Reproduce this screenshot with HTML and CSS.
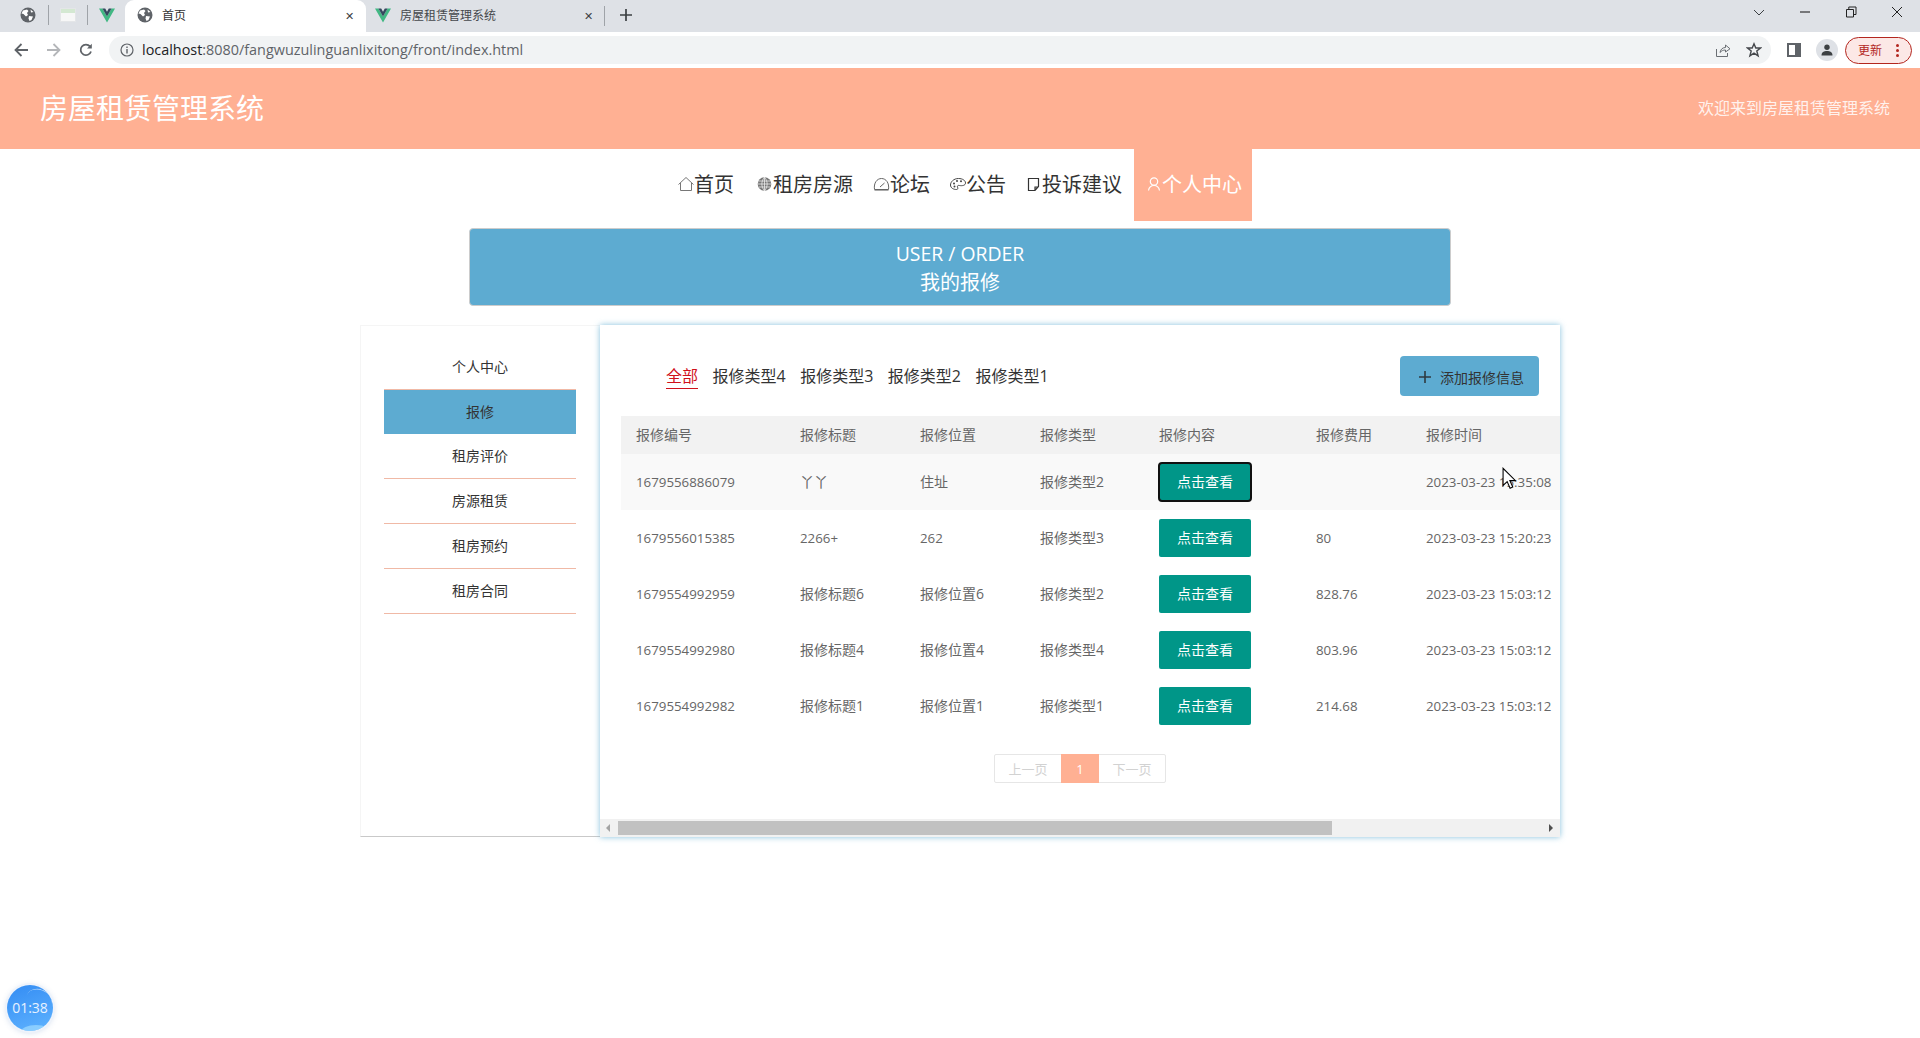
FILE: index.html
```html
<!DOCTYPE html>
<html lang="zh-CN">
<head>
    <meta charset="UTF-8">
    <title>首页</title>
    <link rel="stylesheet" href="styles.css">
</head>
<body>
    <svg class="defs" width="0" height="0">
        <symbol id="globe" viewBox="0 0 16 16">
            <circle cx="8" cy="8" r="7.5" fill="#5f6368"/>
            <path d="M3 3.5 L7 2.5 L8.5 4 L7 6 L8 8 L6 9.5 L3.5 7 L1.5 6.5Z M9 9 L13 9.5 L11.5 13 L9.5 14 L8.5 11.5Z M10.5 2.5 L13.5 5 L11 5.5Z" fill="#fff"/>
        </symbol>
        <symbol id="vue" viewBox="0 0 16 15">
            <path d="M0 1 L8 15 L16 1 H12.6 L8 9 L3.4 1Z" fill="#41b883"/>
            <path d="M3.4 1 L8 9 L12.6 1 H9.8 L8 4.2 L6.2 1Z" fill="#35495e"/>
        </symbol>
    </svg>

    <div class="browser">
        <div class="tabstrip">
            <div class="pinned">
                <svg class="fav"><use href="#globe"/></svg>
                <span class="tab-sep"></span>
                <span class="sheet-fav"></span>
                <span class="tab-sep"></span>
                <svg class="fav"><use href="#vue"/></svg>
            </div>
            <div class="tab tab-active">
                <svg class="fav"><use href="#globe"/></svg>
                <span class="tab-title">首页</span>
                <span class="tab-close">✕</span>
            </div>
            <div class="tab">
                <svg class="fav"><use href="#vue"/></svg>
                <span class="tab-title">房屋租赁管理系统</span>
                <span class="tab-close">✕</span>
            </div>
            <span class="tab-sep"></span>
            <svg class="new-tab" viewBox="0 0 14 14"><path d="M7 1V13M1 7H13" stroke="#3c4043" stroke-width="1.7"/></svg>
            <div class="win-btns">
                <svg viewBox="0 0 14 14" class="win-chevron"><path d="M2 5 L7 10 L12 5" fill="none" stroke="#3c4043"/></svg>
                <svg viewBox="0 0 14 14" class="win-icon"><path d="M2 7H12" stroke="#222" stroke-width="1.1"/></svg>
                <svg viewBox="0 0 14 14" class="win-icon"><path d="M2.5 4.5H9.5V12H2.5Z M4.8 4.5V2H12V9.5H9.5" fill="none" stroke="#222"/></svg>
                <svg viewBox="0 0 14 14" class="win-icon"><path d="M2 2L12 12M12 2L2 12" stroke="#222"/></svg>
            </div>
        </div>
        <div class="toolbar">
            <svg class="tool" viewBox="0 0 16 16"><path d="M15 8H2.500M8.500 2L2.500 8L8.500 14" fill="none" stroke="#5f6368" stroke-width="1.800"/></svg>
            <svg class="tool" viewBox="0 0 16 16"><path d="M1 8H13.500M7.500 2L13.500 8L7.500 14" fill="none" stroke="#b4b6b9" stroke-width="1.800"/></svg>
            <svg class="tool" viewBox="0 0 16 16"><path d="M13 9.5A5.3 5.3 0 1 1 12 4.4" fill="none" stroke="#5f6368" stroke-width="1.8"/><path d="M13.8 1.8V6.6H9Z" fill="#5f6368"/></svg>
            <div class="omnibox">
                <svg class="info" viewBox="0 0 14 14"><circle cx="7" cy="7" r="6" fill="none" stroke="#5f6368" stroke-width="1.2"/><path d="M7 6V10.5M7 3.4V4.9" stroke="#5f6368" stroke-width="1.4"/></svg>
                <span class="url"><b>localhost</b>:8080/fangwuzulinguanlixitong/front/index.html</span>
                <svg class="omni-icon share" viewBox="0 0 16 16"><path d="M1.5 7V14.5H12.5V11" fill="none" stroke="#6a6e73"/><path d="M5 10.5C5.5 7 8 5.5 10.5 5.5V3L15 6.8L10.5 10V8C8 8 6.5 8.8 5 10.5Z" fill="none" stroke="#6a6e73"/></svg>
                <svg class="omni-icon" viewBox="0 0 16 16"><path d="M8 1.8L9.8 6H14.5L10.8 9L12.1 13.8L8 11.1L3.9 13.8L5.2 9L1.5 6H6.2Z" fill="none" stroke="#45484c" stroke-width="1.4"/></svg>
            </div>
            <div class="side-panel"><span></span></div>
            <div class="avatar">
                <svg viewBox="0 0 14 14"><circle cx="7" cy="4.2" r="2.7" fill="#3c4043"/><path d="M1.5 12.5C1.5 9 4 8 7 8S12.5 9 12.5 12.5Z" fill="#3c4043"/></svg>
            </div>
            <div class="update">更新<span class="dots"><i></i><i></i><i></i></span></div>
        </div>
    </div>

    <header class="site-header">
        <h1>房屋租赁管理系统</h1>
        <p>欢迎来到房屋租赁管理系统</p>
    </header>

    <nav class="site-nav">
        <a class="nav-item nav-home">
            <svg class="nav-icon w16" viewBox="0 0 16 18"><path d="M0.500 9.500 L8 2.500 L15.500 9.500 M2.500 8 V15.500 H13.500 V8" fill="none" stroke="#777"/></svg>首页
        </a>
        <a class="nav-item">
            <svg class="nav-icon w18" viewBox="0 0 18 18"><circle cx="9.500" cy="9" r="6.800" fill="#777"/><path d="M2.700 9H16.300M3.700 6H15.300M3.700 12H15.300M9.500 2.200V15.800M9.500 2.200C6 6 6 12 9.500 15.800M9.500 2.200C13 6 13 12 9.500 15.800" fill="none" stroke="#eee" stroke-width=".8"/></svg>租房房源
        </a>
        <a class="nav-item">
            <svg class="nav-icon w17" viewBox="0 0 17 18"><path d="M1.500 14.500 C0.500 8 4 3.500 8.500 3.500 S16.500 8 15.500 14.500Z" fill="none" stroke="#666"/><path d="M7 12 L11.500 8" stroke="#666"/><path d="M1.500 15.500H15.500" stroke="#aaa"/></svg>论坛
        </a>
        <a class="nav-item">
            <svg class="nav-icon w16" viewBox="0 0 16 18"><path d="M8.500 3.500C3.500 3.500 0.500 7 0.500 10C0.500 13 3.500 14.500 6.500 14.500C8 14.500 8 13 7.500 12C7 11 8 10 9.500 10.500C12 11 15.500 10.500 15.500 8C15.500 5.500 12.500 3.500 8.500 3.500Z" fill="none" stroke="#444"/><circle cx="4" cy="8.500" r="1" fill="#444"/><circle cx="7" cy="6" r="1" fill="#444"/><circle cx="11" cy="6.200" r="1" fill="#444"/><circle cx="4.500" cy="11.500" r="1" fill="#444"/></svg>公告
        </a>
        <a class="nav-item">
            <svg class="nav-icon w16" viewBox="0 0 16 18"><path d="M2.500 3.500H12.500V11.500L9 15.500H2.500Z M9 15.500V12H12.500" fill="none" stroke="#333" stroke-width="1.200"/></svg>投诉建议
        </a>
        <a class="nav-item nav-active">
            <svg class="nav-icon w18" viewBox="0 0 18 18"><circle cx="10" cy="6.500" r="3.700" fill="none" stroke="#fff" stroke-width="1.200"/><path d="M4.500 15.500C5 12.500 7 10.500 10 10.500S15 12.500 15.500 15.500" fill="none" stroke="#fff" stroke-width="1.200"/></svg>个人中心
        </a>
    </nav>

    <div class="banner">
        <div class="banner-en">USER / ORDER</div>
        <div class="banner-cn">我的报修</div>
    </div>

    <main class="content">
        <aside class="sidebar">
            <a class="side-item side-first">个人中心</a>
            <a class="side-item side-active">报修</a>
            <a class="side-item">租房评价</a>
            <a class="side-item">房源租赁</a>
            <a class="side-item">租房预约</a>
            <a class="side-item">租房合同</a>
        </aside>

        <section class="panel">
            <div class="panel-top">
                <ul class="type-tabs">
                    <li class="type-active">全部</li>
                    <li>报修类型4</li>
                    <li>报修类型3</li>
                    <li>报修类型2</li>
                    <li>报修类型1</li>
                </ul>
                <button class="add-btn"><svg class="plus" viewBox="0 0 14 14"><path d="M7 1V13M1 7H13" stroke="#2f3a40" stroke-width="1.600"/></svg>添加报修信息</button>
            </div>

            <div class="table-wrap">
                <table class="data-table">
                    <thead>
                        <tr><th>报修编号</th><th>报修标题</th><th>报修位置</th><th>报修类型</th><th>报修内容</th><th>报修费用</th><th>报修时间</th></tr>
                    </thead>
                    <tbody>
                        <tr class="row-hover">
                            <td class="num">1679556886079</td><td>丫丫</td><td>住址</td><td>报修类型2</td>
                            <td><button class="view-btn view-focus">点击查看</button></td>
                            <td class="num"></td><td class="num">2023-03-23 15:35:08</td>
                        </tr>
                        <tr>
                            <td class="num">1679556015385</td><td class="num">2266+</td><td class="num">262</td><td>报修类型3</td>
                            <td><button class="view-btn">点击查看</button></td>
                            <td class="num">80</td><td class="num">2023-03-23 15:20:23</td>
                        </tr>
                        <tr>
                            <td class="num">1679554992959</td><td>报修标题6</td><td>报修位置6</td><td>报修类型2</td>
                            <td><button class="view-btn">点击查看</button></td>
                            <td class="num">828.76</td><td class="num">2023-03-23 15:03:12</td>
                        </tr>
                        <tr>
                            <td class="num">1679554992980</td><td>报修标题4</td><td>报修位置4</td><td>报修类型4</td>
                            <td><button class="view-btn">点击查看</button></td>
                            <td class="num">803.96</td><td class="num">2023-03-23 15:03:12</td>
                        </tr>
                        <tr>
                            <td class="num">1679554992982</td><td>报修标题1</td><td>报修位置1</td><td>报修类型1</td>
                            <td><button class="view-btn">点击查看</button></td>
                            <td class="num">214.68</td><td class="num">2023-03-23 15:03:12</td>
                        </tr>
                    </tbody>
                </table>
            </div>

            <div class="pager">
                <a>上一页</a><a class="page-current">1</a><a>下一页</a>
            </div>

            <div class="hscroll">
                <span class="arrow-left"></span>
                <div class="hscroll-track"><div class="hscroll-thumb"></div></div>
                <span class="arrow-right"></span>
            </div>
        </section>
    </main>

    <div class="timer">01:38</div>

    <svg class="cursor" viewBox="0 0 13 21"><path d="M1 1V17L4.800 13.400L7.500 19.500L10 18.400L7.300 12.500H12.500Z" fill="#fff" stroke="#000"/></svg>
</body>
</html>
```

FILE: styles.css
```css
* {
    box-sizing: border-box;
}
body {
    margin: 0;
    height: 1038px;
    overflow: hidden;
    background: #fff;
    color: #333;
    font-family: "Open Sans", "Noto Sans CJK SC", sans-serif;
}
.defs {
    position: absolute;
}

/* browser frame */
.browser {
    height: 68px;
    background: #fff;
}
.tabstrip {
    height: 32px;
    background: #dee1e6;
    display: flex;
    align-items: center;
}
.pinned {
    width: 125px;
    display: flex;
    align-items: center;
    padding: 0 0 2px 20px;
}
.pinned .tab-sep {
    margin: 0 11px;
}
.pinned .tab-sep:nth-of-type(1) {
    margin-left: 12px;
}
.fav {
    width: 16px;
    height: 16px;
    flex: none;
}
.tab-sep {
    width: 1px;
    height: 20px;
    background: #9fa3a8;
    flex: none;
}
.sheet-fav {
    width: 16px;
    height: 14px;
    background: linear-gradient(#d4e8d2 0 30%, #f7f7f7 30%);
    border: 1px solid #e4e6e8;
    flex: none;
}
.tab {
    width: 238px;
    height: 32px;
    display: flex;
    align-items: center;
    padding: 0 11px 2px 9px;
    font-size: 12px;
    color: #45484c;
}
.tab-active {
    width: 241px;
    padding: 0 12px 2px 12px;
    background: #fff;
    border-radius: 9px 9px 0 0;
    color: #333;
}
.tab-title {
    margin-left: 9px;
    flex: 1;
}
.tab-close {
    font-size: 11px;
    color: #3c4043;
}
.new-tab {
    width: 14px;
    height: 14px;
    margin: 0 0 2px 14px;
}
.win-btns {
    margin-left: auto;
    display: flex;
    align-items: center;
    padding-right: 16px;
}
.win-chevron {
    width: 14px;
    height: 14px;
    margin-right: 32px;
    margin-bottom: 8px;
}
.win-icon {
    width: 14px;
    height: 14px;
    margin-left: 32px;
    margin-bottom: 8px;
}
.win-icon:nth-child(2) {
    margin-left: 0;
}
.toolbar {
    height: 36px;
    display: flex;
    align-items: center;
    padding: 0 8px 0 13px;
}
.tool {
    width: 16px;
    height: 16px;
    margin-right: 17px;
    flex: none;
}
.tool:nth-child(3) {
    margin-left: -1px;
    margin-right: 18px;
}
.omnibox {
    width: 1665px;
    height: 28px;
    margin-left: -3px;
    background: #f1f3f4;
    border-radius: 14px;
    display: flex;
    align-items: center;
    padding: 0 9px 0 11px;
}
.info {
    width: 14px;
    height: 14px;
    margin-right: 8px;
}
.url {
    font-size: 14.4px;
    color: #5f6368;
    flex: 1;
    padding-bottom: 2px;
}
.url b {
    font-weight: 400;
    color: #202124;
}
.omni-icon {
    width: 16px;
    height: 16px;
}
.share {
    margin-right: 15px;
}
.side-panel {
    width: 14px;
    height: 14px;
    margin-left: 16px;
    background: #5f6368;
    padding: 2px 6px 2px 2px;
}
.side-panel span {
    display: block;
    height: 100%;
    background: #fff;
}
.avatar {
    width: 22px;
    height: 22px;
    margin-left: 15px;
    border-radius: 50%;
    background: #dee1e6;
    padding: 4px;
}
.avatar svg {
    display: block;
}
.update {
    width: 67px;
    height: 27px;
    margin-left: 7px;
    border: 1px solid #b3261e;
    border-radius: 14px;
    background: #fce8e6;
    color: #b3261e;
    font-size: 12px;
    display: flex;
    align-items: center;
    padding-left: 12px;
}
.dots {
    margin-left: 14px;
    display: flex;
    flex-direction: column;
    gap: 2px;
}
.dots i {
    width: 3px;
    height: 3px;
    border-radius: 50%;
    background: #b3261e;
}

/* site header */
.site-header {
    height: 81px;
    background: #ffb093;
    color: #fff;
    display: flex;
    align-items: center;
    justify-content: space-between;
    padding: 0 30px 4px 40px;
}
.site-header h1 {
    margin: 0;
    font-size: 28px;
    font-weight: 400;
}
.site-header p {
    margin: 0;
    font-size: 16px;
    color: rgba(255,255,255,.85);
}

/* nav */
.site-nav {
    height: 72px;
    display: flex;
    justify-content: center;
}
.nav-item {
    display: flex;
    align-items: center;
    padding: 0 10px 4px;
    font-size: 20px;
    color: #333;
    height: 72px;
}
.nav-home {
    padding-right: 11px;
}
.nav-active {
    margin-left: 2px;
    background: #ffb093;
    color: #fff;
}
.nav-icon {
    height: 18px;
    flex: none;
    margin-top: 2px;
}
.w16 { width: 16px; }
.w17 { width: 17px; }
.w18 { width: 18px; }

/* banner */
.banner {
    width: 982px;
    height: 78px;
    margin: 7px auto 0;
    background: #5dabd1;
    border: 1px solid #ccc;
    border-radius: 4px;
    color: #fff;
    text-align: center;
    padding-top: 10px;
}
.banner-en {
    font-size: 19.4px;
    line-height: 29px;
}
.banner-cn {
    font-size: 20px;
    line-height: 30px;
}

/* main */
.content {
    width: 1200px;
    margin: 19px 0 0 360px;
    display: flex;
}
.sidebar {
    width: 240px;
    height: 512px;
    border: 1px solid #f5f5f5;
    border-right: 0;
    border-bottom-color: #c9c9c9;
    padding: 19px 24px 0 23px;
    display: flex;
    flex-direction: column;
}
.side-item {
    height: 45px;
    line-height: 44px;
    text-align: center;
    font-size: 14px;
    color: #333;
    border-bottom: 1px solid #f0b9a6;
    flex: none;
}
.side-active {
    height: 44px;
    background: #5dabd1;
    border-bottom: 0;
    line-height: 43px;
}
.panel {
    width: 960px;
    height: 512px;
    background: #fff;
    box-shadow: 0 0 6px rgba(93,171,209,.75);
    display: flex;
    flex-direction: column;
}
.panel-top {
    height: 91px;
    padding: 31px 21px 20px 66px;
    display: flex;
    justify-content: space-between;
}
.type-tabs {
    list-style: none;
    margin: 0;
    padding: 0;
    display: flex;
    gap: 14.5px;
    height: 33px;
    font-size: 16px;
    color: #333;
}
.type-tabs li {
    height: 33px;
    line-height: 40px;
}
.type-active {
    color: #d0111b;
    border-bottom: 1px solid #d0111b;
}
.add-btn {
    width: 139px;
    height: 40px;
    border: 0;
    border-radius: 4px;
    background: #5dabd1;
    color: #333;
    font-family: inherit;
    font-size: 14px;
    padding: 2px 0 0 18px;
    display: flex;
    align-items: center;
}
.plus {
    width: 14px;
    height: 14px;
    margin-right: 8px;
}
.table-wrap {
    margin-left: 21px;
    overflow: hidden;
}
.data-table {
    width: 1198px;
    table-layout: fixed;
    border-collapse: collapse;
    font-size: 14px;
    color: #666;
}
.data-table th {
    height: 38px;
    padding: 0 0 2px 15px;
    background: #f2f2f2;
    font-weight: 400;
    text-align: left;
}
.data-table td {
    height: 56px;
    padding: 0 0 2px 15px;
}
.data-table td.num {
    font-size: 13.3px;
    padding-bottom: 1px;
}
.data-table th:nth-child(1) { width: 164px; }
.data-table th:nth-child(2) { width: 120px; }
.data-table th:nth-child(3) { width: 120px; }
.data-table th:nth-child(4) { width: 119px; }
.data-table th:nth-child(5) { width: 157px; }
.data-table th:nth-child(6) { width: 110px; }
.row-hover {
    background: #f9f9f9;
}
.view-btn {
    display: block;
    width: 92px;
    height: 38px;
    margin-top: 2px;
    border: 0;
    border-radius: 2px;
    background: #009688;
    color: #fff;
    font-family: inherit;
    font-size: 14px;
    padding: 0 0 2px;
}
.view-focus {
    outline: 2px solid #111;
    outline-offset: -1px;
    border-radius: 3px;
}
.pager {
    margin-top: 20px;
    align-self: center;
    display: flex;
    height: 29px;
    font-size: 13px;
    color: #d2d2d2;
    border: 1px solid #e6e6e6;
    border-radius: 2px;
}
.pager a {
    width: 66px;
    line-height: 29px;
    text-align: center;
}
.page-current {
    background: #ffb093;
    color: #fff;
    margin: -1px 0;
    line-height: 31px !important;
    width: 38px !important;
}
.hscroll {
    margin-top: auto;
    height: 18px;
    background: #f1f1f1;
    display: flex;
    align-items: center;
}
.hscroll-track {
    flex: 1;
    height: 14px;
    margin: 0 6px 0 8px;
}
.hscroll-thumb {
    width: 714px;
    height: 100%;
    background: #c1c1c1;
}
.arrow-left, .arrow-right {
    width: 0;
    height: 0;
    border: 4px solid transparent;
    flex: none;
}
.arrow-left {
    margin-left: 6px;
    border-left: 0;
    border-right-color: #a3a3a3;
}
.arrow-right {
    margin-right: 7px;
    border-right: 0;
    border-left-color: #505050;
}

/* overlays */
.timer {
    position: absolute;
    left: 7px;
    top: 985px;
    width: 46px;
    height: 46px;
    border-radius: 50%;
    overflow: hidden;
    background: linear-gradient(160deg, #338cf3, #5fb3ff);
    box-shadow: 0 0 0 2px #eef3fb, 0 1px 6px rgba(60,110,180,.3);
    color: #e8f2ff;
    font-size: 14px;
    line-height: 46px;
    text-align: center;
}
.timer::before {
    content: "";
    position: absolute;
    left: 19px;
    top: 4px;
    width: 26px;
    height: 20px;
    border-top: 1px solid rgba(255,255,255,.6);
    border-radius: 50%;
    transform: rotate(20deg);
}
.timer::after {
    content: "";
    position: absolute;
    left: 14px;
    top: 40px;
    width: 30px;
    height: 14px;
    background: rgba(160,220,255,.7);
    border-radius: 50%;
}
.cursor {
    position: absolute;
    left: 1502px;
    top: 467px;
    width: 14px;
    height: 23px;
}
```
